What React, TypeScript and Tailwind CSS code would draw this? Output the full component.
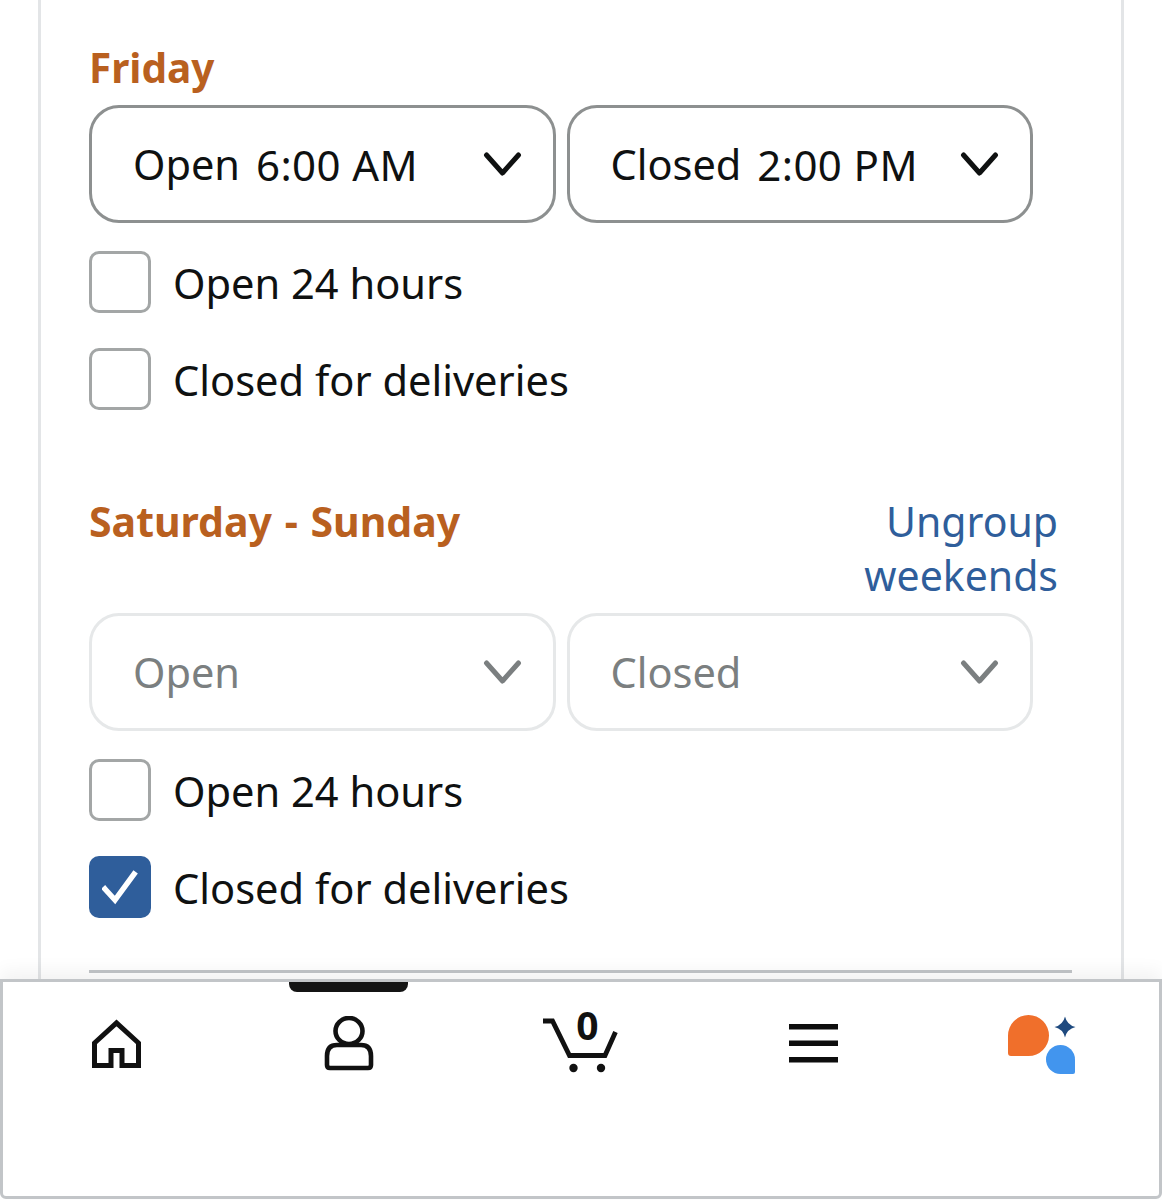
const FONT = "font-['Noto_Sans','Liberation_Sans',sans-serif]"

function Chevron({ muted }: { muted?: boolean }) {
  return (
    <svg width="40" height="28" viewBox="0 0 40 28" fill="none" stroke={muted ? '#7b7f80' : '#0f1111'} strokeWidth="5" strokeLinecap="round" strokeLinejoin="round">
      <path d="M3.5 5 L19.5 23 L35.5 5" />
    </svg>
  )
}

function Select({ label, time, disabled }: { label: string; time?: string; disabled?: boolean }) {
  return (
    <div
      className={`flex h-[118px] w-[466.5px] items-center justify-between rounded-[30px] border-[3px] bg-white pl-[41px] pr-[30px] ${
        disabled ? 'border-[#e6e8e9] text-[#7b7f80]' : 'border-[#8d9090] text-[#0f1111]'
      }`}
    >
      <span className="flex gap-[16px] text-[41.5px]">
        <span>{label}</span>
        {time && <span className="text-[42px] tracking-[0.4px]">{time}</span>}
      </span>
      <Chevron muted={disabled} />
    </div>
  )
}

function Checkbox({ label, checked }: { label: string; checked?: boolean }) {
  return (
    <div className="flex h-[62px] items-center gap-[22px]">
      {checked ? (
        <div className="flex size-[62px] items-center justify-center rounded-[10px] bg-[#2f5e9b]">
          <svg width="36" height="36" viewBox="0 0 36 36" fill="none" stroke="#fff" strokeWidth="5.5" strokeLinecap="square">
            <path d="M3 20 L13 31 L32 5" />
          </svg>
        </div>
      ) : (
        <div className="size-[62px] rounded-[10px] border-[3px] border-[#a3a6a6] bg-white" />
      )}
      <span className="pt-[2px] text-[41.6px] text-[#0f1111]">{label}</span>
    </div>
  )
}

function DayGroup({ checked, disabled, open, close }: { checked?: boolean; disabled?: boolean; open?: string; close?: string }) {
  return (
    <>
      <div className="flex gap-[11px]">
        <Select label="Open" time={open} disabled={disabled} />
        <Select label="Closed" time={close} disabled={disabled} />
      </div>
      <div className="mt-[28px] flex flex-col gap-[35px]">
        <Checkbox label="Open 24 hours" />
        <Checkbox label="Closed for deliveries" checked={checked} />
      </div>
    </>
  )
}

function BottomNav() {
  return (
    <nav className="relative z-10 h-[220px] rounded-b-[6px] border-[3px] border-[#c2c5c8] bg-white shadow-[0_-8px_18px_rgba(0,0,0,0.05)]">
      <div className="absolute left-[286px] top-0 h-[10px] w-[119px] rounded-b-[8px] bg-[#141414]" />
      <div className="-ml-[3px] grid w-[1160px] grid-cols-5 items-start pt-[34px]">
        <div className="flex justify-center">
          <svg width="50" height="60" viewBox="91 1016 50 60" fill="none" stroke="#111" strokeWidth="5" strokeLinejoin="miter">
            <path d="M94.5 1065.5 V1043 L116.5 1023 L138.5 1043 V1065.5 H122 V1050.5 H111 V1065.5 Z" />
          </svg>
        </div>
        <div className="flex justify-center">
          <svg width="52" height="60" viewBox="322 1016 52 60" fill="none" stroke="#111" strokeWidth="4.6">
            <ellipse cx="349" cy="1031" rx="13.5" ry="13" />
            <path d="M337 1045 H361 Q371 1045 371 1056 V1065 Q371 1068 368 1068 H330 Q327 1068 327 1065 V1056 Q327 1045 337 1045 Z" />
          </svg>
        </div>
        <div className="flex justify-center">
          {/* tall viewBox so the 0's line box stays inside the svg */}
          <svg className="-mt-[20px]" width="80" height="80" viewBox="540 996 80 80" fill="none">
            <path d="M543 1021 H552.5 L569.5 1055.5 H605 L615.5 1032" stroke="#111" strokeWidth="4.8" />
            <circle cx="573.5" cy="1068" r="4.2" fill="#111" />
            <circle cx="601" cy="1068" r="4.2" fill="#111" />
            <text x="587.5" y="1040" textAnchor="middle" fontSize="39" fontWeight="700" fill="#111" fontFamily="Noto Sans, sans-serif">0</text>
          </svg>
        </div>
        <div className="flex justify-center">
          <svg width="52" height="60" viewBox="786 1016 52 60" fill="#0d0d0d">
            <rect x="789" y="1024" width="49" height="5.5" />
            <rect x="789" y="1040.5" width="49" height="5.5" />
            <rect x="789" y="1057" width="49" height="5.5" />
          </svg>
        </div>
        <div className="flex justify-center">
          <svg className="-mt-[2px]" width="74" height="62" viewBox="1007 1014 74 62">
            <path d="M1028.5 1015 A20.5 20.5 0 0 1 1028.5 1056 H1011 Q1008 1056 1008 1053 V1035.5 A20.5 20.5 0 0 1 1028.5 1015 Z" fill="#f06f2b" />
            <path d="M1060.5 1045 A14.5 14.5 0 0 1 1075 1059.5 V1072 Q1075 1074 1073 1074 H1060.5 A14.5 14.5 0 0 1 1060.5 1045 Z" fill="#4295ee" />
            <path d="M1065 1016.5 Q1067 1025 1075.5 1027 Q1067 1029 1065 1037.5 Q1063 1029 1054.5 1027 Q1063 1025 1065 1016.5 Z" fill="#1f4a7f" />
          </svg>
        </div>
      </div>
    </nav>
  )
}

export default function App() {
  return (
    <div className={`flex h-[1200px] w-[1162px] flex-col overflow-hidden bg-white ${FONT}`}>
      <main className="mx-[38px] h-[979px] shrink-0 border-x-[3px] border-[#e3e5e7] pl-[48px] pr-[49px]">
        <h2 className="mb-[9px] box-border h-[96px] pt-[40px] text-[40.5px] leading-[56px] font-bold text-[#b9601f]">Friday</h2>
        <DayGroup open="6:00 AM" close="2:00 PM" />

        <div className="mt-[84px] flex items-start justify-between pr-[14px]">
          <h2 className="text-[41px] leading-[54px] font-bold text-[#b9601f] [word-spacing:2px]">Saturday - Sunday</h2>
          <a className="w-[200px] text-right text-[41px] leading-[54px] text-[#2f5e9b]">Ungroup weekends</a>
        </div>
        <div className="mt-[11px]">
          <DayGroup disabled checked />
        </div>
        <hr className="mt-[52px] h-[3px] border-0 bg-[#c2c5c8]" />
      </main>
      <BottomNav />
    </div>
  )
}
